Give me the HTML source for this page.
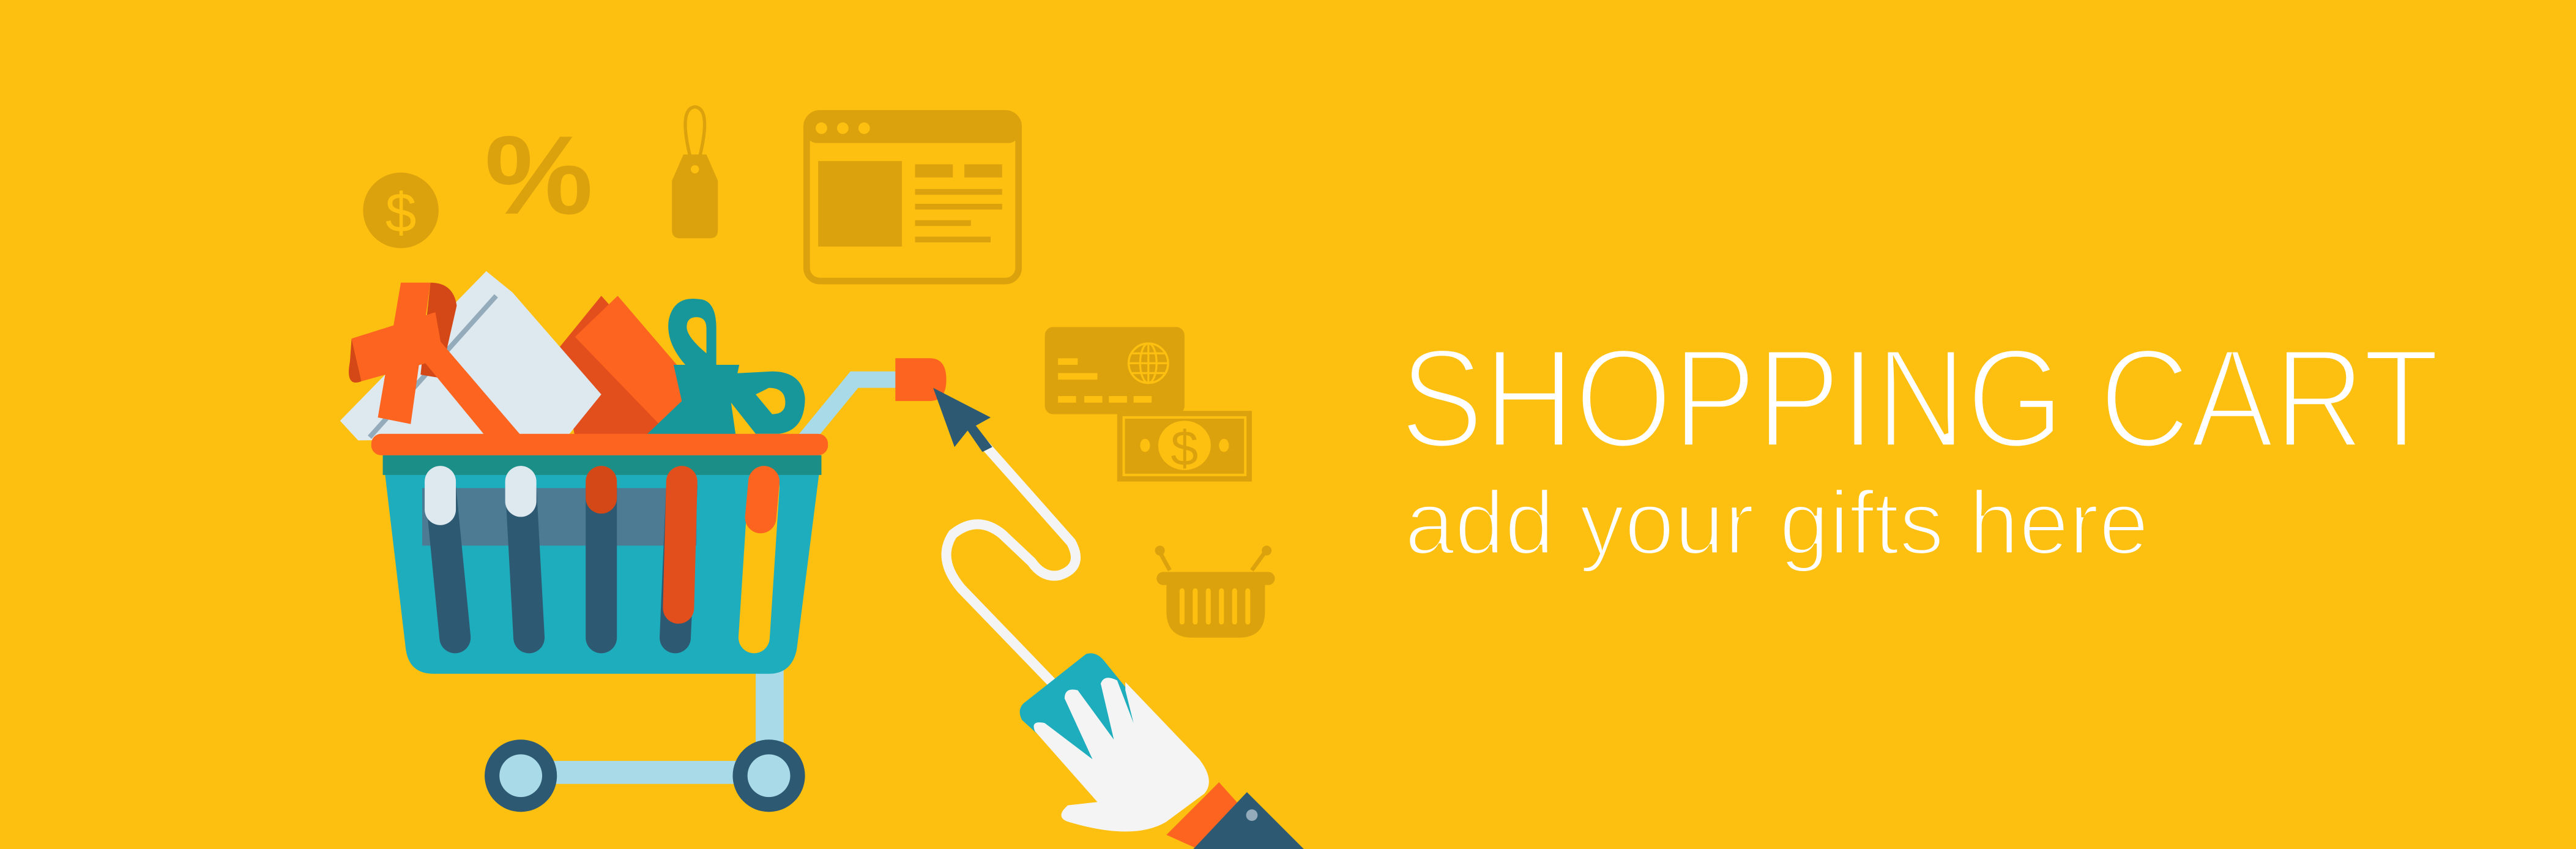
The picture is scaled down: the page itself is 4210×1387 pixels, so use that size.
<!DOCTYPE html>
<html><head><meta charset="utf-8"><style>
html,body{margin:0;padding:0;background:#FDC010;}
svg{display:block;}
</style></head><body>
<svg width="4210" height="1387" viewBox="0 0 1568 516.6" preserveAspectRatio="none" xmlns="http://www.w3.org/2000/svg">
<rect x="0" y="0" width="1568" height="517" fill="#FDC010"/>
<g fill="#DBA20D">
  <circle cx="244" cy="128" r="23"/>
  <text x="244" y="141" fill="#FDC010" font-family="Liberation Sans, sans-serif" font-size="34" text-anchor="middle">$</text>
  <text x="328" y="130" font-family="Liberation Sans, sans-serif" font-weight="bold" font-size="68" text-anchor="middle" textLength="66" lengthAdjust="spacingAndGlyphs">%</text>
  <path d="M409 110 L416 94 L430 94 L437 110 L437 140 Q437 145 432 145 L414 145 Q409 145 409 140 Z"/>
  <circle cx="423" cy="103" r="2.5" fill="#FDC010"/>
  <path d="M420 95 Q413 66 423 65 Q433 66 426 95" fill="none" stroke="#DBA20D" stroke-width="2"/>
  <rect x="491" y="69" width="129" height="102" rx="8" fill="none" stroke="#DBA20D" stroke-width="4"/>
  <rect x="491" y="69" width="129" height="18" rx="6"/>
  <circle cx="500" cy="78" r="3.5" fill="#FDC010"/><circle cx="513" cy="78" r="3.5" fill="#FDC010"/><circle cx="526" cy="78" r="3.5" fill="#FDC010"/>
  <rect x="498" y="98" width="51" height="52"/>
  <rect x="557" y="100" width="23" height="8"/><rect x="587" y="100" width="23" height="8"/>
  <rect x="557" y="115" width="53" height="3.5"/><rect x="557" y="124" width="53" height="3.5"/>
  <rect x="557" y="134" width="34" height="3.5"/><rect x="557" y="144" width="46" height="3.5"/>
  <rect x="636" y="199" width="85" height="53" rx="5"/>
  <g fill="#FDC010"><rect x="644" y="218" width="12" height="4"/><rect x="644" y="227" width="24" height="4"/>
  <rect x="644" y="241" width="11" height="4"/><rect x="660" y="241" width="11" height="4"/><rect x="675" y="241" width="11" height="4"/><rect x="690" y="241" width="11" height="4"/></g>
  <circle cx="699" cy="221" r="12" fill="none" stroke="#FDC010" stroke-width="1.3"/>
  <ellipse cx="699" cy="221" rx="5" ry="12" fill="none" stroke="#FDC010" stroke-width="1.2"/>
  <path d="M687 221 H711 M689 215 H709 M689 227 H709 M699 209 V233" stroke="#FDC010" stroke-width="1.2"/>
  <rect x="680" y="250" width="82" height="43"/>
  <rect x="684" y="254" width="74" height="35" fill="none" stroke="#FDC010" stroke-width="1.5"/>
  <ellipse cx="721" cy="271" rx="16" ry="15" fill="#FDC010"/>
  <text x="721" y="283" font-family="Liberation Sans, sans-serif" font-size="30" text-anchor="middle">$</text>
  <ellipse cx="697" cy="271" rx="3" ry="4" fill="#FDC010"/><ellipse cx="745" cy="271" rx="3" ry="4" fill="#FDC010"/>
  <path d="M712 347 L706 336 M762 347 L770 336" stroke="#DBA20D" stroke-width="2.5"/>
  <circle cx="706" cy="335" r="3"/><circle cx="771" cy="335" r="3"/>
  <rect x="704" y="348" width="72" height="8" rx="4"/>
  <path d="M710 355 H770 V372 Q770 388 754 388 H726 Q710 388 710 372 Z"/>
  <g fill="#FDC010"><rect x="718" y="358" width="3" height="22" rx="1.5"/><rect x="726" y="358" width="3" height="22" rx="1.5"/><rect x="734" y="358" width="3" height="22" rx="1.5"/><rect x="742" y="358" width="3" height="22" rx="1.5"/><rect x="750" y="358" width="3" height="22" rx="1.5"/><rect x="758" y="358" width="3" height="22" rx="1.5"/></g>
</g>
<!-- white cord -->
<path d="M597 268 L652 330 Q660 345 645 350 Q635 352 628 342 L610 325 Q595 313 580 325 Q570 340 585 358 L640 415" fill="none" stroke="#F4F4F4" stroke-width="6" stroke-linecap="round"/>
<!-- handle -->
<path d="M488 270 L520 231 L550 231" fill="none" stroke="#A8DAE8" stroke-width="10"/>
<path d="M545 218 H566 Q576 218 576 231 Q576 244 566 244 H545 Z" fill="#FD6420"/>
<path d="M568 236 L603 254 L594 259 L604 272 L598 275 L589 262 L581 272 Z" fill="#2D5A72"/>
<!-- leg/axle -->
<rect x="460" y="400" width="17" height="62" fill="#A8DAE8"/>
<rect x="315" y="463" width="155" height="14" fill="#A8DAE8"/>
<circle cx="317" cy="472" r="22" fill="#2D5A72"/><circle cx="317" cy="472" r="13" fill="#A8DAE8"/>
<circle cx="468" cy="472" r="22" fill="#2D5A72"/><circle cx="468" cy="472" r="13" fill="#A8DAE8"/>
<!-- gifts -->
<path d="M340 212 L366 180 L420 240 L410 266 L350 266 Z" fill="#E24E1C"/>
<path d="M350 205 L376 180 L424 236 L405 262 Z" fill="#FD6420"/>
<path d="M207 256 L296 165 L312 178 L366 240 L345 266 L218 268 Z" fill="#DEE8EF"/>
<path d="M225 266 L302 180" stroke="#93ABBB" stroke-width="3"/>
<path d="M244 172 H262 L250 258 L230 254 Z" fill="#FD6420"/>
<path d="M262 172 Q276 172 278 186 L268 230 L256 228 Z" fill="#D44817"/>
<path d="M214 206 L265 190 L270 218 L220 232 Z" fill="#FD6420"/>
<path d="M214 206 L220 232 Q210 236 213 220 Z" fill="#D44817"/>
<path d="M240 198 L258 196 L318 266 L296 266 Z" fill="#FD6420"/>
<path d="M425 182 Q410 180 407 195 Q405 210 420 225 L428 233 L436 225 L436 200 Q436 182 425 182 Z M424 193 Q430 193 430 200 L430 215 Q418 205 418 199 Q418 193 424 193 Z" fill="#18979B" fill-rule="evenodd"/>
<path d="M432 228 L470 226 Q488 226 490 242 Q490 262 474 264 L460 264 L445 245 Z M468 236 Q478 236 478 245 Q478 252 470 252 L460 240 Z" fill="#18979B" fill-rule="evenodd"/>
<path d="M410 222 L450 222 L445 245 L448 266 L392 266 L415 244 Z" fill="#18979B"/>
<!-- basket -->
<path d="M233 277 H500 L485 395 Q482 410 468 410 H264 Q249 410 247 395 Z" fill="#1EADBD"/>
<rect x="233" y="277" width="267" height="12" fill="#1B8F87"/>
<rect x="257" y="297" width="167" height="35" fill="#4C7B93"/>
<g stroke-linecap="round" stroke-width="19">
<path d="M268 296 L277 388" stroke="#2D5A72"/>
<path d="M317 296 L322 388" stroke="#2D5A72"/>
<path d="M366 296 L366 388" stroke="#2D5A72"/>
<path d="M415 296 L411 388" stroke="#2D5A72"/>
<path d="M465 296 L459 388" stroke="#FDC010"/>
</g>
<path d="M268 293 L268 310" stroke="#DEE8EF" stroke-width="19" stroke-linecap="round"/>
<path d="M317 293 L317 305" stroke="#DEE8EF" stroke-width="19" stroke-linecap="round"/>
<path d="M366 293 L366 303" stroke="#D44817" stroke-width="19" stroke-linecap="round"/>
<path d="M415 293 L413 370" stroke="#E24E1C" stroke-width="19" stroke-linecap="round"/>
<path d="M465 293 L463 315" stroke="#FD6420" stroke-width="19" stroke-linecap="round"/>
<rect x="226" y="264" width="278" height="13" rx="6" fill="#FD6420"/>
<!-- hand -->
<path d="M661 398 Q667 396 672 402 L715 455 L690 500 L622 438 Q619 432 623 428 Z" fill="#1EADBD"/>
<path d="M685 415 L730 462 Q740 475 733 483 L710 500 Q690 512 650 500 Q642 497 650 490 L668 488 L630 445 Q627 438 636 440 L665 462 L648 425 Q648 418 656 420 L678 450 L670 416 Q672 410 680 414 L690 440 L685 420 Z" fill="#F4F4F4"/>
<path d="M742 476 L760 496 L730 517 L710 508 Z" fill="#FD6420"/>
<path d="M759 482 L794 517 L726 517 Z" fill="#2D5A72"/>
<circle cx="762" cy="496" r="3.5" fill="#93ABBB"/>
<!-- text -->
<text x="852" y="272" fill="#FFFFFF" stroke="#FDC010" stroke-width="3" font-family="Liberation Sans, sans-serif" font-size="86" textLength="633" lengthAdjust="spacingAndGlyphs">SHOPPING CART</text>
<text x="855" y="337" fill="#FFFFFF" stroke="#FDC010" stroke-width="1.8" font-family="Liberation Sans, sans-serif" font-size="55" textLength="453" lengthAdjust="spacingAndGlyphs">add your gifts here</text>
</svg>
</body></html>
